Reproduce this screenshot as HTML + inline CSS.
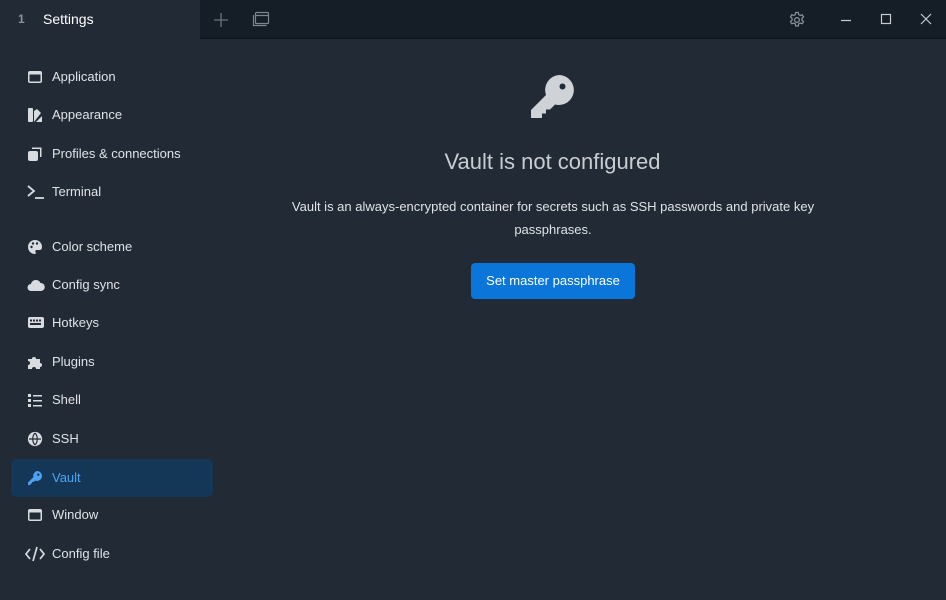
<!DOCTYPE html>
<html><head><meta charset="utf-8"><style>
*{margin:0;padding:0;box-sizing:border-box}
body{width:946px;height:600px;background:#222a35;font-family:"Liberation Sans",sans-serif;color:#d5d9de;overflow:hidden;position:relative}
.tb{position:absolute;left:200px;top:0;right:0;height:39px;background:#151d27;border-bottom:1px solid #0d131a}
.tab{position:absolute;left:0;top:0;width:200px;height:39px}
.tab .n{position:absolute;left:18px;top:12px;font-size:12px;font-weight:bold;color:#8a929b}
.tab .t{position:absolute;left:43px;top:11px;font-size:14px;color:#fff}
.item{position:absolute;left:11px;width:202px;height:38px;border-radius:6px;font-size:13px;color:#dfe3e7}
.item svg{position:absolute;left:16px;top:11px}
.item span{position:absolute;left:41px;top:11px}
.item.act{background:#153757;color:#4ba4f2}
h1{position:absolute;left:0;width:1105px;top:149px;text-align:center;font-weight:300;font-size:22px;color:#c9cdd2}
p{position:absolute;left:273px;width:560px;top:195px;text-align:center;font-size:13px;line-height:23px;color:#dfe3e7}
.btn{position:absolute;left:471px;top:263px;width:164px;height:36px;background:#0b76d9;border-radius:4px;color:#fff;font-size:13px;text-align:center;line-height:35px}
</style></head><body>
<div class="tab"><span class="n">1</span><span class="t">Settings</span></div>
<div class="tb">
<svg style="position:absolute;left:13px;top:12px" width="16" height="16" stroke="#6b737c" stroke-width="1.3"><path d="M8 1v14M1 8h14"/></svg>
<svg style="position:absolute;left:52px;top:11px" width="18" height="16" fill="none" stroke="#7d858e" stroke-width="1.2"><rect x="3.5" y="1.5" width="13" height="11" rx="1"/><path d="M3.5 4.5h13M1.5 4v10.5h13"/></svg>
<svg style="position:absolute;left:588px;top:11px" width="18" height="18" viewBox="0 0 24 24" fill="none" stroke="#8d949c" stroke-width="1.6"><circle cx="12" cy="12" r="3.2"/><path d="M10.3 2h3.4l.6 2.8 2 1.1 2.7-1 1.7 2.9-2.1 1.9v2.6l2.1 1.9-1.7 2.9-2.7-1-2 1.1-.6 2.8h-3.4l-.6-2.8-2-1.1-2.7 1-1.7-2.9 2.1-1.9V9.7L3.3 7.8 5 4.9l2.7 1 2-1.1z"/></svg>
<svg style="position:absolute;left:640px;top:14px" width="12" height="12" stroke="#c8ccd1" stroke-width="1.2"><path d="M1 6.5h10"/></svg>
<svg style="position:absolute;left:680px;top:13px" width="12" height="12" fill="none" stroke="#c8ccd1" stroke-width="1.2"><rect x="1.5" y="1.5" width="9" height="9"/></svg>
<svg style="position:absolute;left:720px;top:13px" width="12" height="12" stroke="#c8ccd1" stroke-width="1.2"><path d="M1 1l10 10M11 1L1 11"/></svg>
</div>

<div class="item" style="top:58px"><svg width="16" height="16" fill="#d8dce0"><rect x="1" y="2" width="14" height="12" rx="2"/><rect x="2.5" y="5.5" width="11" height="7" fill="#222a35"/></svg><span>Application</span></div>
<div class="item" style="top:96px"><svg width="16" height="16" fill="#d8dce0"><rect x="1" y="1" width="5" height="14" rx="1"/><path d="M7 4l3-2 4 4-7 9zM9 15l6-6v6z"/></svg><span>Appearance</span></div>
<div class="item" style="top:135px"><svg width="16" height="16" fill="#d8dce0"><rect x="1" y="5" width="10" height="10" rx="2"/><path d="M5 3h8v8h1.5V1.5H5z"/></svg><span>Profiles &amp; connections</span></div>
<div class="item" style="top:173px"><svg width="18" height="16" fill="none" stroke="#d8dce0" stroke-width="1.8"><path d="M1 2l6 5-6 5M8 14h9"/></svg><span>Terminal</span></div>
<div class="item" style="top:228px"><svg width="16" height="16" fill="#d8dce0"><path d="M8 1a7 7 0 100 14c1 0 1-1 .5-2s0-2 1.5-2h2c2 0 3-1 3-3A7 7 0 008 1z"/><circle cx="4.5" cy="8" r="1.2" fill="#222a35"/><circle cx="6" cy="4.5" r="1.2" fill="#222a35"/><circle cx="10" cy="4.5" r="1.2" fill="#222a35"/></svg><span>Color scheme</span></div>
<div class="item" style="top:266px"><svg width="18" height="16" fill="#d8dce0"><path d="M4 14a3.5 3.5 0 010-7 5 5 0 019.5-1A4 4 0 0114 14z"/></svg><span>Config sync</span></div>
<div class="item" style="top:304px"><svg width="18" height="16" fill="#d8dce0"><rect x="1" y="2" width="16" height="11" rx="2"/><g fill="#222a35"><rect x="3" y="4.5" width="2" height="2"/><rect x="6" y="4.5" width="2" height="2"/><rect x="9" y="4.5" width="2" height="2"/><rect x="12" y="4.5" width="2" height="2"/><rect x="3" y="8" width="11" height="2"/></g></svg><span>Hotkeys</span></div>
<div class="item" style="top:343px"><svg width="16" height="16" fill="#d8dce0"><path d="M1 5h4a2 2 0 114 0h4v4a2 2 0 110 4v2H9a2 2 0 10-4 0H1v-4a2 2 0 100-4z"/></svg><span>Plugins</span></div>
<div class="item" style="top:381px"><svg width="16" height="16" fill="#d8dce0"><rect x="1" y="2" width="3" height="3"/><rect x="1" y="7" width="3" height="3"/><rect x="1" y="12" width="3" height="3"/><rect x="6" y="3" width="9" height="1.5"/><rect x="6" y="8" width="9" height="1.5"/><rect x="6" y="13" width="9" height="1.5"/></svg><span>Shell</span></div>
<div class="item" style="top:420px"><svg width="16" height="16" fill="none" stroke="#d8dce0" stroke-width="1.6"><circle cx="8" cy="8" r="6.3" fill="#d8dce0"/><path d="M2 8h12M8 2c-3 3-3 9 0 12M8 2c3 3 3 9 0 12" stroke="#222a35" stroke-width="1.2"/></svg><span>SSH</span></div>
<div class="item act" style="top:459px"><svg width="16" height="16" viewBox="0 0 16 16" fill="#4ba4f2"><path d="M10 1a5 5 0 11-2 9.6L6.5 12H5v1.5H3.5V15H1v-2.5l5.4-5.4A5 5 0 0110 1z"/><circle cx="11.3" cy="4.7" r="1.2" fill="#153757"/></svg><span>Vault</span></div>
<div class="item" style="top:496px"><svg width="16" height="16" fill="#d8dce0"><rect x="1" y="2" width="14" height="12" rx="2"/><rect x="2.5" y="5.5" width="11" height="7" fill="#222a35"/></svg><span>Window</span></div>
<div class="item" style="top:535px"><svg width="20" height="16" fill="none" stroke="#d8dce0" stroke-width="1.7" style="left:14px"><path d="M5 3L1 8l4 5M15 3l4 5-4 5M12 1L8 15"/></svg><span>Config file</span></div>

<svg style="position:absolute;left:531px;top:75px" width="44" height="43" viewBox="0 0 44 43" fill="#cfd2d6"><path d="M28 0a15 15 0 11-4 29.5L19 34.5h-4v4h-4v4.5H0v-8l15-15A15 15 0 0128 0z"/><circle cx="31.5" cy="11.5" r="3" fill="#222a35"/></svg>
<h1>Vault is not configured</h1>
<p>Vault is an always-encrypted container for secrets such as SSH passwords and private key passphrases.</p>
<div class="btn">Set master passphrase</div>
</body></html>
